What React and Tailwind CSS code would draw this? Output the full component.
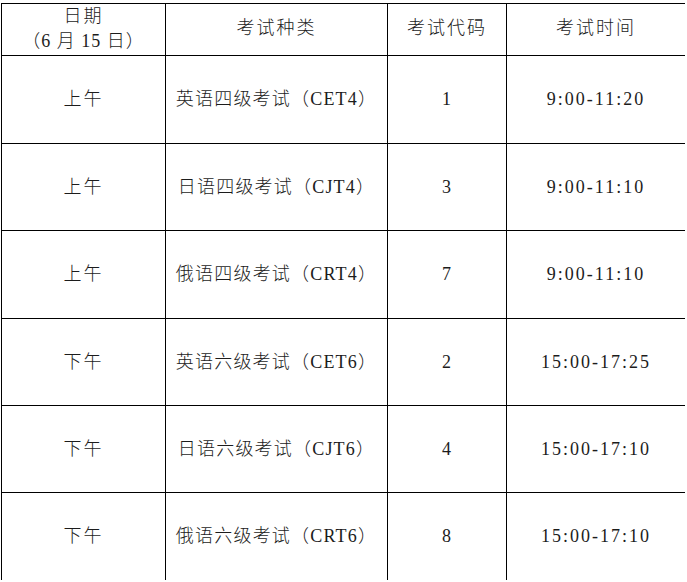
import React from "react";

const rows = [
  ["上午", "英语四级考试（CET4）", "1", "9:00-11:20", "h-[88px]"],
  ["上午", "日语四级考试（CJT4）", "3", "9:00-11:10", "h-[87px]"],
  ["上午", "俄语四级考试（CRT4）", "7", "9:00-11:10", "h-[88px]"],
  ["下午", "英语六级考试（CET6）", "2", "15:00-17:25", "h-[87px]"],
  ["下午", "日语六级考试（CJT6）", "4", "15:00-17:10", "h-[87px]"],
  ["下午", "俄语六级考试（CRT6）", "8", "15:00-17:10", "h-[88px]"],
];

const cell = "border-l border-t border-black flex items-center justify-center text-center";

export default function App() {
  return (
    <div
      className="w-[687px] h-[582px] overflow-hidden bg-white text-[18px] font-light tracking-[1px] text-[#1c1c1c]"
      style={{ fontFamily: '"Liberation Serif", "Noto Sans CJK SC", serif' }}
    >
      <div className="mt-[3px] ml-[1px] grid grid-cols-[164px_222px_119px_179px]">
        <div className={`${cell} h-[52px] flex-col leading-[25px] pb-[2px]`}>
          <span className="tracking-[2px]">日期</span>
          <span>（6 月 15 日）</span>
        </div>
        <div className={`${cell} h-[52px] pb-[2px] tracking-[2px]`}>考试种类</div>
        <div className={`${cell} h-[52px] pb-[2px] tracking-[2px]`}>考试代码</div>
        <div className={`${cell} h-[52px] pb-[2px] tracking-[2px]`}>考试时间</div>
        {rows.map((r, i) => (
          <React.Fragment key={i}>
            <div className={`${cell} ${r[4]} tracking-[2px]`}>{r[0]}</div>
            <div className={`${cell} ${r[4]} tracking-[1.2px]`}>{r[1]}</div>
            <div className={`${cell} ${r[4]}`}>{r[2]}</div>
            <div className={`${cell} ${r[4]} tracking-[2px]`}>{r[3]}</div>
          </React.Fragment>
        ))}
      </div>
    </div>
  );
}
